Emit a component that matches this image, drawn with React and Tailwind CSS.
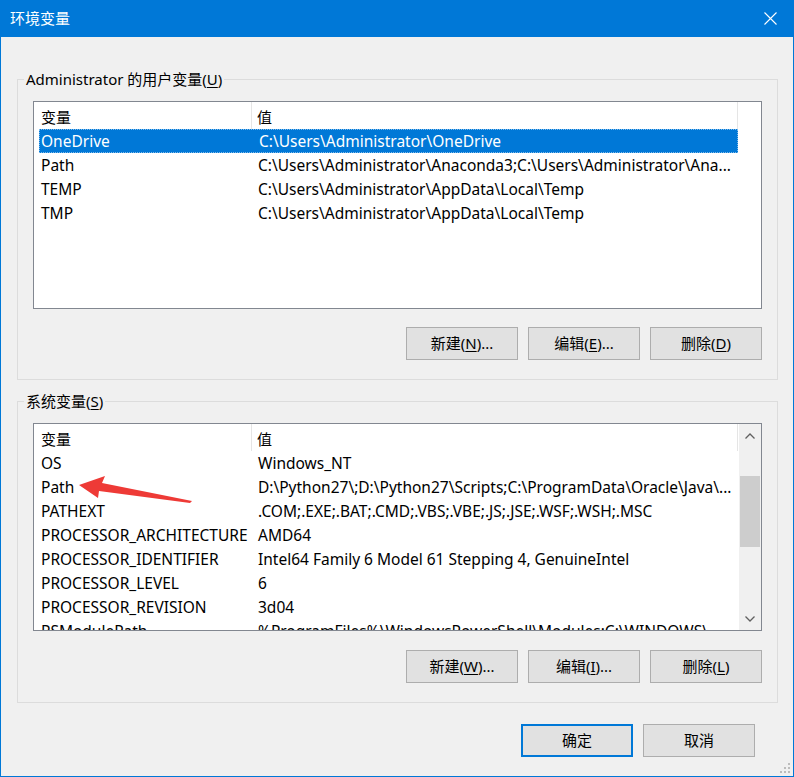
import React from "react";

const FONT = "font-['Noto_Sans','Noto_Sans_CJK_SC',sans-serif]";

function Mn({ pre, k, post }) {
  return (
    <span>
      {pre}(<span className="underline underline-offset-2">{k}</span>){post}
    </span>
  );
}

function Btn({ children, primary }) {
  return (
    <div
      className={
        "h-[33px] w-[112px] flex items-center justify-center bg-[#e1e1e1] text-[15px] text-black " +
        (primary ? "border-2 border-[#0078d7]" : "border border-[#adadad]")
      }
    >
      {children}
    </div>
  );
}

function Header({ endLine }) {
  return (
    <div className="flex h-[27px] text-[15px] text-black">
      <div className="w-[218px] pl-[7px] pt-[3px] flex items-center border-r border-[#e5e5e5]">变量</div>
      <div className={"w-[486px] pl-[5px] pt-[3px] flex items-center " + (endLine ? "border-r border-[#e5e5e5]" : "")}>值</div>
    </div>
  );
}

function Row({ name, value, selected }) {
  return (
    <div
      className={
        "ml-[5px] w-[699px] h-[24px] pt-[2px] flex items-center text-[15.5px] whitespace-nowrap overflow-hidden " +
        (selected ? "bg-[#0078d7] text-white border border-dotted border-[#7fbbeb]" : "text-black")
      }
    >
      <div className={"w-[213px] shrink-0 " + (selected ? "pl-[1px]" : "pl-[2px]")}>{name}</div>
      <div className="pl-[6px] shrink-0">{value}</div>
    </div>
  );
}

function GroupBox({ label, children, className }) {
  return (
    <div className={"relative border border-[#dcdcdc] w-[761px] " + (className || "")}>
      <span className="absolute left-[6px] -top-[12px] bg-[#f0f0f0] px-[2px] text-[15px] leading-[22px] text-black">
        {label}
      </span>
      {children}
    </div>
  );
}

export default function App() {
  const userRows = [
    ["OneDrive", "C:\\Users\\Administrator\\OneDrive", true],
    ["Path", "C:\\Users\\Administrator\\Anaconda3;C:\\Users\\Administrator\\Ana..."],
    ["TEMP", "C:\\Users\\Administrator\\AppData\\Local\\Temp"],
    ["TMP", "C:\\Users\\Administrator\\AppData\\Local\\Temp"],
  ];
  const sysRows = [
    ["OS", "Windows_NT"],
    ["Path", "D:\\Python27\\;D:\\Python27\\Scripts;C:\\ProgramData\\Oracle\\Java\\..."],
    ["PATHEXT", ".COM;.EXE;.BAT;.CMD;.VBS;.VBE;.JS;.JSE;.WSF;.WSH;.MSC"],
    ["PROCESSOR_ARCHITECTURE", "AMD64"],
    ["PROCESSOR_IDENTIFIER", "Intel64 Family 6 Model 61 Stepping 4, GenuineIntel"],
    ["PROCESSOR_LEVEL", "6"],
    ["PROCESSOR_REVISION", "3d04"],
    ["PSModulePath", "%ProgramFiles%\\WindowsPowerShell\\Modules;C:\\WINDOWS\\..."],
  ];

  return (
    <div className={"relative w-[794px] h-[777px] bg-[#f0f0f0] border-x border-b border-[#0078d7] overflow-hidden " + FONT}>
      {/* title bar */}
      <div className="h-[37px] bg-[#0078d7] flex items-center justify-between pl-[9px] pr-[16px] text-white">
        <span className="text-[15px]">环境变量</span>
        <svg width="13" height="13" viewBox="0 0 13 13">
          <path d="M0.5 0.5 L12.5 12.5 M12.5 0.5 L0.5 12.5" stroke="white" strokeWidth="1.1" />
        </svg>
      </div>

      <div className="pl-[16px] pt-[42px]">
        <GroupBox label={<span>Administrator 的用户变量(<span className="underline underline-offset-2">U</span>)</span>}>
          <div className="pt-[21px] pl-[15px] pb-[19px]">
            <div className="w-[729px] h-[208px] bg-white border border-[#828790] overflow-hidden">
              <Header endLine />
              {userRows.map(([n, v, s]) => (
                <Row key={n} name={n} value={v} selected={s} />
              ))}
            </div>
            <div className="w-[729px] flex justify-end gap-[10px] mt-[18px]">
              <Btn><Mn pre="新建" k="N" post="..." /></Btn>
              <Btn><Mn pre="编辑" k="E" post="..." /></Btn>
              <Btn><Mn pre="删除" k="D" post="" /></Btn>
            </div>
          </div>
        </GroupBox>

        <GroupBox className="mt-[21px]" label={<span>系统变量(<span className="underline underline-offset-2">S</span>)</span>}>
          <div className="pt-[21px] pl-[15px] pb-[19px]">
            <div className="w-[729px] h-[208px] bg-white border border-[#828790] overflow-hidden flex">
              <div className="w-[705px] overflow-hidden">
                <Header endLine />
                {sysRows.map(([n, v]) => (
                  <Row key={n} name={n} value={v} />
                ))}
              </div>
              <div className="w-[22px] h-full bg-[#f0f0f0] flex flex-col items-center">
                <div className="h-[23px] w-full flex items-center justify-center">
                  <svg width="10" height="6" viewBox="0 0 10 6">
                    <path d="M0.5 5.5 L5 1 L9.5 5.5" fill="none" stroke="#606060" strokeWidth="1.3" />
                  </svg>
                </div>
                <div className="h-[29px]" />
                <div className="w-[20px] h-[71px] bg-[#cdcdcd]" />
                <div className="flex-1" />
                <div className="h-[23px] w-full flex items-center justify-center">
                  <svg width="10" height="6" viewBox="0 0 10 6">
                    <path d="M0.5 0.5 L5 5 L9.5 0.5" fill="none" stroke="#606060" strokeWidth="1.3" />
                  </svg>
                </div>
              </div>
            </div>
            <div className="w-[729px] flex justify-end gap-[10px] mt-[19px]">
              <Btn><Mn pre="新建" k="W" post="..." /></Btn>
              <Btn><Mn pre="编辑" k="I" post="..." /></Btn>
              <Btn><Mn pre="删除" k="L" post="" /></Btn>
            </div>
          </div>
        </GroupBox>

        <div className="w-[738px] flex justify-end gap-[10px] mt-[21px]">
          <Btn primary>确定</Btn>
          <Btn>取消</Btn>
        </div>
      </div>

      {/* resize grip */}
      <svg className="absolute right-[2px] bottom-[2px]" width="12" height="12" viewBox="0 0 12 12">
        <g fill="#bcbcbc">
          <rect x="9" y="1" width="2" height="2" />
          <rect x="5" y="5" width="2" height="2" />
          <rect x="9" y="5" width="2" height="2" />
          <rect x="1" y="9" width="2" height="2" />
          <rect x="5" y="9" width="2" height="2" />
          <rect x="9" y="9" width="2" height="2" />
        </g>
      </svg>

      {/* red annotation arrow */}
      <svg className="absolute left-0 top-0 pointer-events-none" width="794" height="777" viewBox="0 0 794 777">
        <polygon
          points="78,485 104,476 101,483 191,501 189,503 98,491 97,498"
          fill="#ee3a36"
        />
      </svg>
    </div>
  );
}
